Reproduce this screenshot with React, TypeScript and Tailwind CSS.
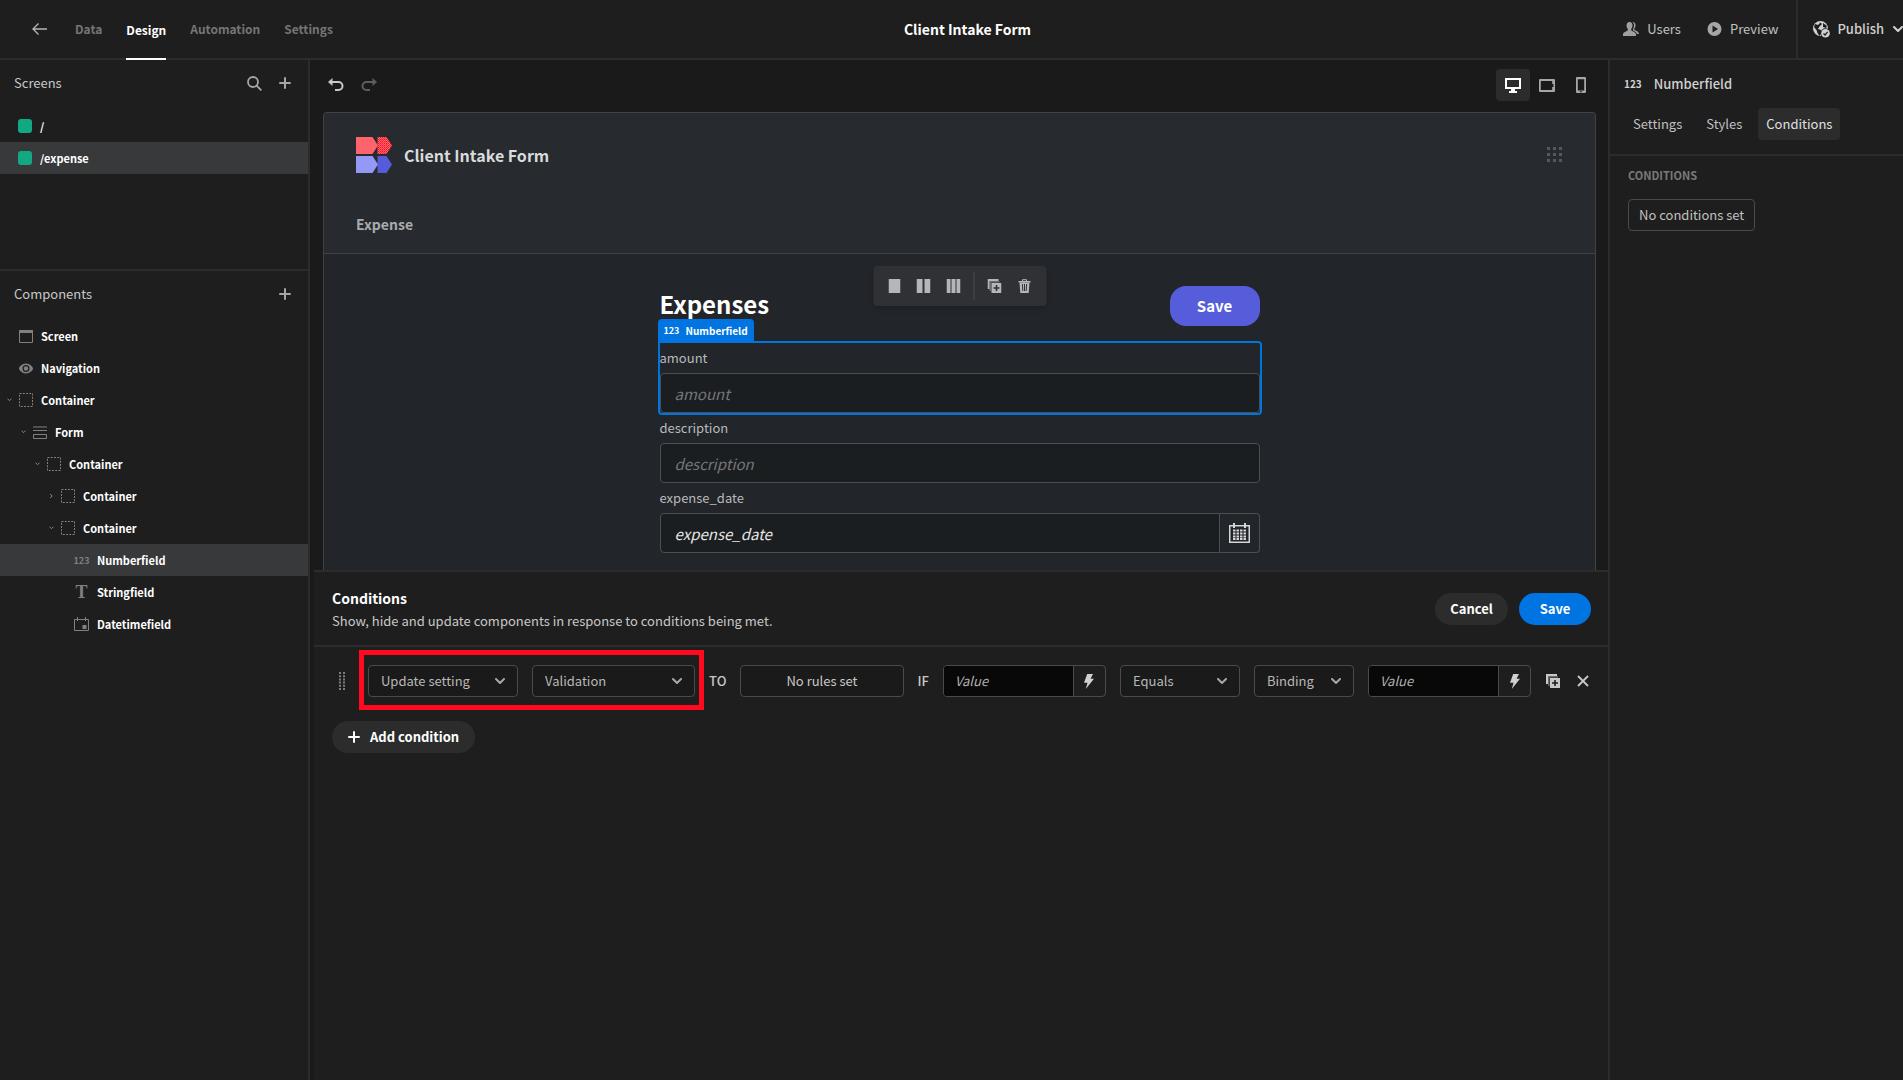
import React, { useState } from 'react';

interface IconProps {
    className?: string;
}

interface TreeNode {
    id: string;
    label: string;
    icon: string;
    level: number;
    arrow?: 'open' | 'closed';
}

const SCREENS = ['/', '/expense'];

const COMPONENTS: TreeNode[] = [
    { id: 'screen', label: 'Screen', icon: 'screen', level: 0 },
    { id: 'navigation', label: 'Navigation', icon: 'eye', level: 0 },
    { id: 'container-1', label: 'Container', icon: 'container', level: 0, arrow: 'open' },
    { id: 'form', label: 'Form', icon: 'form', level: 1, arrow: 'open' },
    { id: 'container-2', label: 'Container', icon: 'container', level: 2, arrow: 'open' },
    { id: 'container-3', label: 'Container', icon: 'container', level: 3, arrow: 'closed' },
    { id: 'container-4', label: 'Container', icon: 'container', level: 3, arrow: 'open' },
    { id: 'number', label: 'Numberfield', icon: 'number', level: 4 },
    { id: 'string', label: 'Stringfield', icon: 'text', level: 4 },
    { id: 'date', label: 'Datetimefield', icon: 'date', level: 4 },
];

const LEVEL_PADDING = ['pl-[5px]', 'pl-[19px]', 'pl-[33px]', 'pl-[47px]', 'pl-[61px]'];

const PlusIcon: React.FC<IconProps> = ({ className }) => (
    <svg className={className} width="12" height="12" viewBox="0 0 12 12" stroke="currentColor" strokeWidth="2" strokeLinecap="round">
        <path d="M6 1v10M1 6h10" />
    </svg>
);

const ChevronIcon: React.FC<IconProps> = ({ className }) => (
    <svg className={className} width="10" height="6" viewBox="0 0 10 6" fill="none" stroke="currentColor" strokeWidth="2" strokeLinecap="round" strokeLinejoin="round">
        <path d="M1 1l4 4 4-4" />
    </svg>
);

const UndoIcon: React.FC<IconProps> = ({ className }) => (
    <svg className={className} width="16" height="14" viewBox="0 0 16 14">
        <path d="M0 4L4.500 0v8z" fill="currentColor" />
        <path d="M3 4h7.500a4 4 0 0 1 0 8H7" fill="none" stroke="currentColor" strokeWidth="2" />
    </svg>
);

const DuplicateIcon: React.FC<IconProps> = ({ className }) => (
    <svg className={className} width="14" height="14" viewBox="0 0 14 14" fill="currentColor">
        <path d="M0 0h11v2H2v8H0z" />
        <path d="M2 2h10v1.500H3.500V12H2z" opacity="0.45" />
        <path fillRule="evenodd" d="M4 4h10v10H4zM8.200 6v2.200H6v1.600h2.200V12h1.600V9.800H12V8.200H9.800V6z" />
    </svg>
);

const TrashIcon: React.FC = () => (
    <svg width="14" height="14" viewBox="0 0 14 14" fill="none" stroke="currentColor">
        <path d="M1 2.700h12" strokeWidth="1.600" />
        <path d="M5 2.500V.700h4v1.800" />
        <path d="M2 3.500h10L11.200 14H2.800z" fill="currentColor" stroke="none" />
        <path d="M4.900 5l.400 7M7 5v7M9.100 5l-.400 7" stroke="#2f3135" strokeWidth="1" />
    </svg>
);

const BoltIcon: React.FC = () => (
    <svg width="10" height="15" viewBox="0 0 10 15" fill="currentColor">
        <path d="M3.200 0H9L6.600 4.800H10L1.800 15l1.700-6.200H0z" />
    </svg>
);

const NumberIcon: React.FC<IconProps> = ({ className }) => <span className={`font-bold leading-none ${className}`}>123</span>;

const BrandLogo: React.FC = () => (
    <svg width="36" height="36" viewBox="0 0 36 36">
        <defs>
            <pattern id="dots" width="2" height="2" patternUnits="userSpaceOnUse">
                <rect width="2" height="2" fill="#ff636c" />
                <rect width="1" height="1" fill="#ff0f22" />
                <rect x="1" y="1" width="1" height="1" fill="#ff3040" />
            </pattern>
        </defs>
        <path d="M21.500 0H30.500L36 8.500 30.500 17h-9z" fill="url(#dots)" />
        <path d="M0 0h16.500L22 8.500 16.500 17H0z" fill="#ff636c" />
        <path d="M21.500 19H30.500L36 27.500 30.500 36h-9z" fill="#555bd9" />
        <path d="M0 19h16.500L22 27.500 16.500 36H0z" fill="#9499f5" />
    </svg>
);

const ComponentIcon: React.FC<{ name: string }> = ({ name }) => {
    switch (name) {
        case 'screen':
            return (
                <svg width="14" height="13" viewBox="0 0 14 13">
                    <path d="M.500 .500h13v12H.500z" fill="none" stroke="currentColor" />
                    <path d="M0 0h14v3H0z" fill="currentColor" />
                </svg>
            );
        case 'eye':
            return (
                <svg width="14" height="11" viewBox="0 0 14 11">
                    <path fillRule="evenodd" d="M7 .500C3 .500 0 4 0 5.500s3 5 7 5 7-3.500 7-5-3-5-7-5zM7 2a3.500 3.500 0 1 1 0 7 3.500 3.500 0 0 1 0-7z" fill="currentColor" />
                    <circle cx="7" cy="5.500" r="2.200" fill="currentColor" />
                </svg>
            );
        case 'container':
            return (
                <svg width="14" height="14" viewBox="0 0 14 14" fill="none" stroke="currentColor" strokeDasharray="2 1.250">
                    <path d="M.500 .500h13v13H.500z" />
                </svg>
            );
        case 'form':
            return (
                <svg width="14" height="13" viewBox="0 0 14 13" fill="none" stroke="currentColor">
                    <path d="M0 1h14M0 4.500h14M.500 8.500h13v4H.500z" />
                </svg>
            );
        case 'number':
            return <NumberIcon className="text-[9px]" />;
        case 'text':
            return <span className="font-['Liberation_Serif',serif] text-[18px] font-bold leading-none">T</span>;
        default:
            return (
                <svg width="15" height="14" viewBox="0 0 15 14" fill="none" stroke="currentColor">
                    <path d="M.500 2.500h14v11H.500zM3.500 0v4M11.500 0v4" />
                    <path d="M8.500 8h4v4h-4z" fill="currentColor" stroke="none" />
                </svg>
            );
    }
};

const Header: React.FC = () => (
    <header className="grid h-[60px] grid-cols-[1fr_auto_1fr] items-stretch border-b-2 border-[#2c2c2c] pl-8">
        <nav className="flex items-center gap-6 text-xs font-bold text-[#757575]">
            <button type="button" aria-label="Back" className="mr-1 text-[#b5b5b5]">
                <svg width="15" height="12" viewBox="0 0 15 12" fill="none" stroke="currentColor" strokeWidth="1.300">
                    <path d="M15 6H1M6.500 .500L1 6l5.500 5.500" />
                </svg>
            </button>
            <a href="#data">Data</a>
            <a href="#design" className="-mb-0.5 flex items-center self-stretch border-y-2 border-t-transparent border-b-white text-white">Design</a>
            <a href="#automation">Automation</a>
            <a href="#settings">Settings</a>
        </nav>
        <h1 className="self-center text-[14px] font-bold text-white">Client Intake Form</h1>
        <div className="flex items-stretch justify-end text-[13px] text-[#c0c0c0]">
            <button type="button" className="mr-[26px] flex items-center gap-2">
                <svg width="16" height="14" viewBox="0 0 16 14" fill="#a0a0a0">
                    <path d="M6.500 0c2 0 3 1.500 3 3.600 0 1.500-.600 2.700-1.300 3.400v1.300c0 .600 4.800 1.700 4.800 4.200V14H0v-1.500c0-2.500 4.800-3.600 4.800-4.200V7c-.700-.700-1.300-1.900-1.300-3.400C3.500 1.500 4.500 0 6.500 0z" />
                    <path d="M9.500 0c2.200 0 3 1.500 3 3.300 0 1.300-.500 2.600-1.200 3.300v1.200c0 .500 4.700 1.500 4.700 4.200h-2c-.400-2.200-3-3-4-3.600V7c.600-.700 1-2 1-3.300C11 2 10.500.800 9.500 0z" />
                </svg>
                Users
            </button>
            <button type="button" className="mr-[18px] flex items-center gap-2">
                <svg width="15" height="14" viewBox="0 0 14 14">
                    <path fillRule="evenodd" d="M7 0a7 7 0 1 1 0 14A7 7 0 0 1 7 0zM5 3.500v7L10.500 7z" fill="#a6a6a6" />
                </svg>
                Preview
            </button>
            <button type="button" className="flex items-center gap-[7px] border-l-2 border-[#2c2c2c] pl-[15px] font-medium text-[#d0d0d0]">
                <svg width="17" height="17" viewBox="0 0 17 17">
                    <circle cx="7.500" cy="7.500" r="7.500" fill="#d0d0d0" />
                    <path d="M2 3l3 1 2.500-2.500L9 3 6.500 5.500 5 8l3 1 .500 3-2 3-2-3-1-3L1 6zM10 2l4 3-1 2-3-1z" fill="#1e1e1e" />
                    <circle cx="12.500" cy="12.300" r="5" fill="#1e1e1e" />
                    <circle cx="12.500" cy="12.300" r="4.300" fill="#d0d0d0" />
                    <path d="M10.500 12.500l1.500 1.500 2.700-3.200" fill="none" stroke="#1e1e1e" strokeWidth="1.200" />
                </svg>
                Publish
                <ChevronIcon className="ml-0.5" />
            </button>
        </div>
    </header>
);

const Sidebar: React.FC = () => {
    const [screen, setScreen] = useState('/expense');
    const [selected, setSelected] = useState('number');

    return (
        <aside className="w-[310px] shrink-0 border-r-2 border-[#2c2c2c] text-[#c8c8c8]">
            <section className="h-[211px] border-b-2 border-[#2c2c2c]">
                <div className="flex h-[50px] items-center gap-[17px] pr-[17px] pb-1 pl-[14px]">
                    <h2 className="flex-1 text-[13px]">Screens</h2>
                    <button type="button" aria-label="Search" className="text-[#a6a6a6]">
                        <svg width="15" height="15" viewBox="0 0 15 15" fill="none" stroke="currentColor" strokeWidth="1.800">
                            <circle cx="6" cy="6" r="5" />
                            <path d="M9.600 9.600l4.200 4.200" strokeLinecap="round" />
                        </svg>
                    </button>
                    <button type="button" aria-label="Add screen" className="text-[#a6a6a6]"><PlusIcon /></button>
                </div>
                {SCREENS.map(path => (
                    <button
                        key={path}
                        type="button"
                        onClick={() => setScreen(path)}
                        className={`flex h-8 w-full items-center gap-2 pl-[18px] text-[11px] font-bold text-white ${screen === path ? 'bg-[#38393b]' : ''}`}
                    >
                        <span className="size-3.5 rounded-[3px] bg-[#12a883]" />
                        {path}
                    </button>
                ))}
            </section>
            <section>
                <div className="flex h-[49px] items-center justify-between pr-[17px] pb-1 pl-[14px]">
                    <h2 className="text-[13px]">Components</h2>
                    <button type="button" aria-label="Add component" className="text-[#a6a6a6]"><PlusIcon /></button>
                </div>
                {COMPONENTS.map(node => (
                    <button
                        key={node.id}
                        type="button"
                        onClick={() => setSelected(node.id)}
                        className={`flex h-8 w-full items-center ${LEVEL_PADDING[node.level]} ${selected === node.id ? 'bg-[#38393b]' : ''}`}
                    >
                        <span className="flex w-[13px] items-center pl-0.5 text-[#8a8a8a]">
                            {node.arrow && (
                                <svg className={node.arrow === 'closed' ? '-rotate-90' : ''} width="5" height="4" viewBox="0 0 5 4" fill="none" stroke="currentColor">
                                    <path d="M.500 .700l2 2 2-2" />
                                </svg>
                            )}
                        </span>
                        <span className="flex w-[15px] justify-center text-[#808080]"><ComponentIcon name={node.icon} /></span>
                        <span className="pl-2 text-[11px] font-bold text-white">{node.label}</span>
                    </button>
                ))}
            </section>
        </aside>
    );
};

const CanvasToolbar: React.FC = () => (
    <div className="flex items-center justify-between pt-[9px] pr-[10px] pb-[11px] pl-[18px] text-[#c8c8c8]">
        <div className="flex gap-[17px]">
            <button type="button" aria-label="Undo"><UndoIcon /></button>
            <button type="button" aria-label="Redo" className="text-[#5e5e5e]"><UndoIcon className="-scale-x-100" /></button>
        </div>
        <div className="flex text-[#a6a6a6]">
            <button type="button" aria-label="Desktop" className="flex h-8 w-[34px] items-center justify-center rounded bg-[#2c2c2c] text-white">
                <svg width="16" height="15" viewBox="0 0 16 15">
                    <path d="M1 1h14v9H1z" fill="none" stroke="currentColor" strokeWidth="2" />
                    <path d="M6 11h4v2h2v2H4v-2h2z" fill="currentColor" />
                </svg>
            </button>
            <button type="button" aria-label="Tablet" className="flex h-8 w-[34px] items-center justify-center">
                <svg width="16" height="13" viewBox="0 0 16 13">
                    <path fillRule="evenodd" d="M1 0h14a1 1 0 0 1 1 1v11a1 1 0 0 1-1 1H1a1 1 0 0 1-1-1V1a1 1 0 0 1 1-1zM1.800 2v9h11.400V8h1.300V5h-1.300V2z" fill="currentColor" />
                </svg>
            </button>
            <button type="button" aria-label="Mobile" className="flex h-8 w-[34px] items-center justify-center">
                <svg width="10" height="16" viewBox="0 0 10 16">
                    <path fillRule="evenodd" d="M1 0h8a1 1 0 0 1 1 1v14a1 1 0 0 1-1 1H1a1 1 0 0 1-1-1V1a1 1 0 0 1 1-1zM1.800 2.300v11.200h6.400V2.300zM4 14.300v1h2v-1z" fill="currentColor" />
                </svg>
            </button>
        </div>
    </div>
);

const BlockToolbar: React.FC = () => (
    <div className="absolute top-3 left-1/2 flex h-10 -translate-x-1/2 items-center gap-4 rounded bg-[#2f3135] px-[15px] text-[#b4b6ba] shadow-md">
        <button type="button" aria-label="One column">
            <svg width="12" height="14" viewBox="0 0 12 14" fill="currentColor"><path d="M0 0h12v14H0z" /></svg>
        </button>
        <button type="button" aria-label="Two columns">
            <svg width="14" height="14" viewBox="0 0 14 14" fill="currentColor"><path d="M0 0h6v14H0zM8 0h6v14H8z" /></svg>
        </button>
        <button type="button" aria-label="Three columns">
            <svg width="14" height="14" viewBox="0 0 14 14" fill="currentColor"><path d="M0 0h4v14H0zM5 0h4v14H5zM10 0h4v14h-4z" /></svg>
        </button>
        <span className="-mx-[3px] h-7 w-px bg-[#4b4d51]" />
        <button type="button" aria-label="Duplicate"><DuplicateIcon /></button>
        <button type="button" aria-label="Delete"><TrashIcon /></button>
    </div>
);

const fieldInput = 'h-10 w-full rounded border border-[#4b4f55] bg-[#1b1e21] px-[14px] text-[15px] italic';

const Canvas: React.FC = () => (
    <div className="mr-3 ml-[13px] overflow-hidden rounded-t border border-b-0 border-[#3f4347] bg-[#22252a]">
        <div className="border-b border-[#3f4347] bg-[#272a2f] px-8 pt-6">
            <div className="flex items-center gap-3">
                <BrandLogo />
                <h2 className="flex-1 text-[16px] font-bold text-[#d9dadb]">Client Intake Form</h2>
                <svg width="16" height="16" viewBox="0 0 16 16" fill="#55585c">
                    <path d="M0 0h3v3H0zM6 0h3v3H6zM12 0h3v3h-3zM0 6h3v3H0zM6 6h3v3H6zM12 6h3v3h-3zM0 12h3v3H0zM6 12h3v3H6zM12 12h3v3h-3z" />
                </svg>
            </div>
            <a href="#expense" className="mt-10 mb-[18px] block text-[14px] leading-[22px] font-bold text-[#a9abae]">Expense</a>
        </div>
        <div className="relative pb-[17px]">
            <BlockToolbar />
            <form className="mx-auto max-w-[600px] text-[#b9babc]" onSubmit={e => e.preventDefault()}>
                <div className="flex items-center justify-between pt-8 pb-[17px]">
                    <h3 className="pb-1 text-2xl leading-9 font-bold text-white">Expenses</h3>
                    <button type="submit" className="h-10 w-[90px] rounded-2xl bg-[#565ddb] text-[15px] font-bold text-white">Save</button>
                </div>
                <div className="relative">
                    <label htmlFor="amount" className="block text-[13px] leading-[30px]">amount</label>
                    <input id="amount" type="text" placeholder="amount" className={`${fieldInput} placeholder:text-[#75777a]`} />
                    <div className="pointer-events-none absolute -inset-0.5 rounded border-2 rounded-tl-none border-[#0074e0]">
                        <div className="absolute bottom-full -left-0.5 mb-0.5 flex h-[22px] items-center gap-1.5 rounded-t bg-[#0074e0] px-1.5 text-[10px] font-bold text-white">
                            <NumberIcon className="text-[9px]" />
                            Numberfield
                        </div>
                    </div>
                </div>
                <div>
                    <label htmlFor="description" className="block text-[13px] leading-[30px]">description</label>
                    <input id="description" type="text" placeholder="description" className={`${fieldInput} placeholder:text-[#75777a]`} />
                </div>
                <div>
                    <label htmlFor="expense-date" className="block text-[13px] leading-[30px]">expense_date</label>
                    <div className="flex">
                        <input id="expense-date" type="text" placeholder="expense_date" className={`${fieldInput} rounded-r-none placeholder:text-[#e6e6e6]`} />
                        <button type="button" aria-label="Pick a date" className="flex w-10 shrink-0 items-center justify-center rounded-r border border-l-0 border-[#4b4f55] text-[#d5d6d8]">
                            <svg width="21" height="20" viewBox="0 0 21 20" fill="none" stroke="currentColor">
                                <path d="M.750 2.750h19.500v16.500H.750z" strokeWidth="1.500" />
                                <path d="M5 0v5M16 0v5" strokeWidth="2" />
                                <path d="M4 7.500h13M4 10.500h13M4 13.500h13M4 16h13" strokeWidth="2" strokeDasharray="2.500 1" />
                            </svg>
                        </button>
                    </div>
                </div>
            </form>
        </div>
    </div>
);

const Dropdown: React.FC<{ label: string; value: string }> = ({ label, value }) => (
    <div className="relative">
        <select aria-label={label} defaultValue={value} className="h-8 w-full appearance-none rounded border border-[#4a4a4a] bg-[#1a1a1a] pr-8 pl-3 text-[13px] text-[#b8b8b8]">
            <option>{value}</option>
        </select>
        <ChevronIcon className="pointer-events-none absolute top-[13px] right-[13px] text-[#a6a6a6]" />
    </div>
);

const BindableInput: React.FC<{ label: string }> = ({ label }) => (
    <div className="flex h-8 overflow-hidden rounded border border-[#4a4a4a]">
        <input type="text" aria-label={label} placeholder="Value" className="min-w-0 flex-1 bg-[#080808] px-[11px] text-[13px] italic placeholder:text-[#b0b0b0]" />
        <button type="button" aria-label="Open bindings" className="flex w-8 shrink-0 items-center justify-center border-l border-[#4a4a4a] text-[#d0d0d0]"><BoltIcon /></button>
    </div>
);

const ConditionsDrawer: React.FC = () => (
    <section className="ml-1 flex-1 border-t-2 border-[#2c2c2c] bg-[#1e1e1e] text-[#c8c8c8]">
        <div className="flex h-[75px] items-center gap-[11px] border-b-2 border-[#2c2c2c] pr-[17px] pl-[18px]">
            <div className="flex-1">
                <h2 className="text-[14px] leading-6 font-bold text-white">Conditions</h2>
                <p className="text-[13px] leading-[22px]">Show, hide and update components in response to conditions being met.</p>
            </div>
            <button type="button" className="h-8 w-[73px] rounded-full bg-[#2c2c2c] text-[13px] font-bold text-white">Cancel</button>
            <button type="button" className="h-8 w-[72px] rounded-full bg-[#0074e0] text-[13px] font-bold text-white">Save</button>
        </div>
        <div className="grid grid-cols-[22px_150px_1fr_auto_1fr_auto_1fr_120px_100px_1fr_16px_16px] items-center gap-[14px] pt-[18px] pr-[17px] pl-[18px] text-[13px]">
            <svg className="ml-[7px]" width="6" height="18" viewBox="0 0 6 18" stroke="#7d7d7d" strokeWidth="2" strokeDasharray="2 1.200">
                <path d="M1 0v18M5 0v18" />
            </svg>
            <div className="relative col-span-2 grid grid-cols-[150px_1fr] gap-[14px]">
                <Dropdown label="Action" value="Update setting" />
                <Dropdown label="Setting" value="Validation" />
                <div className="pointer-events-none absolute -inset-x-[9px] -top-[15px] -bottom-[13px] border-5 border-[#ff0a1f]" />
            </div>
            <span className="font-medium">TO</span>
            <button type="button" className="h-8 rounded border border-[#4a4a4a] bg-[#1a1a1a]">No rules set</button>
            <span className="font-medium">IF</span>
            <BindableInput label="Left value" />
            <Dropdown label="Operator" value="Equals" />
            <Dropdown label="Value type" value="Binding" />
            <BindableInput label="Right value" />
            <button type="button" aria-label="Duplicate condition" className="flex justify-center"><DuplicateIcon /></button>
            <button type="button" aria-label="Remove condition" className="flex justify-center">
                <svg width="12" height="12" viewBox="0 0 12 12" stroke="currentColor" strokeWidth="1.800"><path d="M1 1l10 10M11 1L1 11" /></svg>
            </button>
        </div>
        <button type="button" className="mt-6 ml-[18px] flex h-8 items-center gap-2.5 rounded-full bg-[#2c2c2c] px-4 text-[13px] font-bold text-white">
            <PlusIcon />
            Add condition
        </button>
    </section>
);

const SettingsPanel: React.FC = () => (
    <aside className="w-[295px] shrink-0 border-l-2 border-[#2c2c2c] text-[13px] text-[#c0c0c0]">
        <div className="border-b-2 border-[#2c2c2c] pb-[14px]">
            <div className="flex h-12 items-center gap-3 pl-[14px] font-medium text-[#d0d0d0]">
                <NumberIcon className="text-[10px]" />
                <h2>Numberfield</h2>
            </div>
            <div className="flex gap-2 pl-[15px]">
                <button type="button" className="h-8 px-2">Settings</button>
                <button type="button" className="h-8 px-2">Styles</button>
                <button type="button" className="h-8 rounded bg-[#2c2c2c] px-2 text-[#e0e0e0]">Conditions</button>
            </div>
        </div>
        <div className="px-[18px] pt-[9px]">
            <h3 className="text-[11px] leading-5 font-bold text-[#7a7a7a]">CONDITIONS</h3>
            <button type="button" className="mt-[14px] h-8 rounded border border-[#4a4a4a] px-2.5">No conditions set</button>
        </div>
    </aside>
);

const App: React.FC = () => (
    <div className="flex min-h-screen flex-col overflow-hidden bg-[#1e1e1e] font-['Noto_Sans_CJK_SC',sans-serif]">
        <Header />
        <div className="flex flex-1">
            <Sidebar />
            <main className="flex min-w-0 flex-1 flex-col bg-[#1a1a1a]">
                <CanvasToolbar />
                <Canvas />
                <ConditionsDrawer />
            </main>
            <SettingsPanel />
        </div>
    </div>
);

export default App;
